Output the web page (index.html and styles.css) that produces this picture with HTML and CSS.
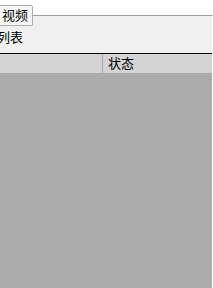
FILE: index.html
```html
<!DOCTYPE html>
<html lang="zh">
<head>
    <meta charset="UTF-8">
    <meta name="viewport" content="width=device-width, initial-scale=1.0">
    <title>视频</title>
    <link rel="stylesheet" href="styles.css">
</head>
<body>
    <div class="tabs">
        <div class="tabstrip">
            <div class="tab">视频</div>
        </div>
        <div class="pane">
            <div class="label">列表</div>
            <div class="list">
                <div class="header">
                    <div class="col first"></div>
                    <div class="col">状态</div>
                </div>
                <div class="rows"></div>
            </div>
        </div>
    </div>
</body>
</html>
```

FILE: styles.css
```css
* {
    box-sizing: border-box;
    font-family: "Noto Sans CJK SC", "Noto Sans", sans-serif;
}

html, body {
    margin: 0;
    height: 100%;
    overflow: hidden;
}

.tabs {
    height: 100%;
    display: flex;
    flex-direction: column;
    background-color: #ffffff;
}

.tabs .tabstrip {
    height: 15px;
    display: flex;
}

.tabs .tab {
    position: relative;
    z-index: 1;
    margin-top: 5px;
    margin-left: -4px;
    height: 21px;
    width: 37px;
    padding-left: 5px;
    border: 1px solid #adadad;
    border-top-right-radius: 2px;
    background-color: #f7f7f7;
    font-size: 13px;
    line-height: 18px;
    color: #000;
}

.tabs .pane {
    flex: 1;
    display: flex;
    flex-direction: column;
    background-color: #f0f0f0;
    border-top: 1px solid #a0a0a0;
    border-right: 1px solid #ffffff;
}

.tabs .pane .label {
    height: 37px;
    padding-top: 12px;
    margin-left: -3px;
    font-size: 13px;
    line-height: 18px;
    color: #000;
}

.tabs .pane .list {
    flex: 1;
    display: flex;
    flex-direction: column;
    border-top: 1px solid #000;
}

.tabs .pane .list .header {
    height: 19px;
    display: flex;
    background-color: #d4d4d4;
}

.tabs .pane .list .header .col {
    padding-left: 5px;
    font-size: 13px;
    line-height: 18px;
    color: #000;
}

.tabs .pane .list .header .first {
    width: 103px;
    border-right: 1px solid #a8a8a8;
}

.tabs .pane .list .rows {
    flex: 1;
    background-color: #ababab;
}
```
